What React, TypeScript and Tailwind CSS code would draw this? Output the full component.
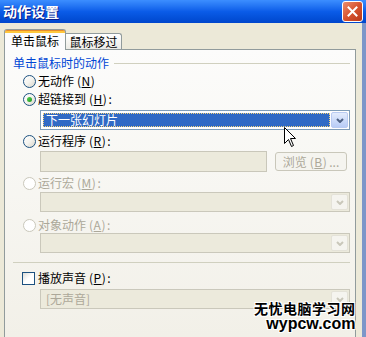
import React from "react";

const cjk = "font-['Noto_Sans_CJK_SC','Noto_Sans',sans-serif]";

function Radio({ checked, disabled }: { checked?: boolean; disabled?: boolean }) {
  return (
    <span
      className={`relative flex h-[13px] w-[13px] shrink-0 items-center justify-center rounded-full border ${
        disabled
          ? "border-[#CAC8BB] bg-white"
          : "border-[#1C5180] bg-gradient-to-br from-white via-[#F4F3EE] to-[#D6D4C8]"
      }`}
    >
      {checked && (
        <span className="h-[5px] w-[5px] rounded-full bg-gradient-to-br from-[#55D155] to-[#1A9A1A]" />
      )}
    </span>
  );
}

function Key({ k }: { k: string }) {
  return (
    <span className="ml-[3px] tracking-[0.5px]">
      (<u>{k}</u>)
    </span>
  );
}

function Chevron({ disabled }: { disabled?: boolean }) {
  return (
    <svg width="8" height="5" viewBox="0 0 8 5">
      <path
        d="M1 1 L4 4 L7 1"
        fill="none"
        stroke={disabled ? "#C9C7BA" : "#4D6185"}
        strokeWidth="2"
      />
    </svg>
  );
}

function Combo({
  disabled,
  text,
  selected,
}: {
  disabled?: boolean;
  text?: string;
  selected?: boolean;
}) {
  return (
    <div
      className={`ml-[35px] flex h-[20px] w-[310px] items-stretch border p-px ${
        disabled ? "border-[#CAC8BB] bg-[#ECEADC]" : "border-[#7F9DB9] bg-white"
      }`}
    >
      <div className="flex flex-1 items-stretch p-px">
        {selected ? (
          <div className="flex flex-1 items-center border border-dotted border-[#F4D27A] bg-[#316AC5] pl-[2px] text-white">
            {text}
          </div>
        ) : (
          <div className="flex flex-1 items-center pl-[3px] text-[#ACA899]">{text}</div>
        )}
      </div>
      <div
        className={`flex w-[17px] items-center justify-center rounded-[2px] border ${
          disabled
            ? "border-[#E4E2D8] bg-[#F5F4EF]"
            : "border-[#B9CBF2] bg-gradient-to-b from-[#E3ECFD] to-[#B8CCF6]"
        }`}
      >
        <Chevron disabled={disabled} />
      </div>
    </div>
  );
}

function RadioRow({
  label,
  k,
  checked,
  disabled,
  colon,
  mt,
}: {
  label: string;
  k: string;
  checked?: boolean;
  disabled?: boolean;
  colon?: boolean;
  mt: string;
}) {
  return (
    <div className={`${mt} ml-[18px] flex h-[16px] items-center`}>
      <Radio checked={checked} disabled={disabled} />
      <span className={`ml-[2px] flex items-center ${disabled ? "text-[#ACA899]" : "text-black"}`}>
        {label}
        <Key k={k} />
        {colon && <span className="ml-[1px]">:</span>}
      </span>
    </div>
  );
}

export default function App() {
  return (
    <div className={`relative flex h-[337px] w-[366px] flex-col overflow-hidden bg-[#ECE9D8] text-[12px] leading-[14px] ${cjk}`}>
      {/* title bar */}
      <div className="flex h-[23px] shrink-0 items-center justify-between bg-gradient-to-b from-[#3C8EFF] via-[#0B5CE8] to-[#0046CC] pl-[3px] pr-[3px]">
        <span className="pb-[2px] text-[14px] font-bold leading-[16px] text-white [text-shadow:1px_1px_0_#0A1C8A]">
          动作设置
        </span>
        <div className="flex h-[21px] w-[21px] items-center justify-center rounded-[3px] border border-white bg-gradient-to-br from-[#E98C6D] via-[#D7532F] to-[#B8381A]">
          <svg width="11" height="11" viewBox="0 0 11 11">
            <path d="M1.5 1.5 L9.5 9.5 M9.5 1.5 L1.5 9.5" stroke="white" strokeWidth="2" strokeLinecap="square" />
          </svg>
        </div>
      </div>

      {/* body */}
      <div className="flex flex-1 border-r-[4px] border-[#7D96C9] pt-[6px]">
        <div className="ml-[4px] flex w-[352px] flex-col">
          {/* tabs */}
          <div className="flex h-[20px] items-end">
            <div className="relative z-10 -mb-px flex h-[21px] w-[62px] flex-col rounded-t-[3px] border-x border-t border-[#919B9C] bg-[#FCFCFE]">
              <div className="h-[3px] rounded-t-[2px] border-t border-[#E68B2C] bg-[#FFC83C]" />
              <div className="flex flex-1 items-center justify-center pb-[1px] text-black">单击鼠标</div>
            </div>
            <div className="flex h-[16px] w-[56px] items-center justify-center rounded-tr-[3px] border-r border-t border-[#919B9C] bg-gradient-to-b from-white to-[#ECEBE6] text-black">
              鼠标移过
            </div>
          </div>

          {/* panel */}
          <div className="flex flex-1 flex-col border-x border-t border-[#919B9C] bg-gradient-to-b from-[#FCFCFB] to-[#F2F0E8]">
            <div className="mt-[6px] ml-[8px] mr-[5px] flex h-[14px] items-center">
              <span className="text-[#0046D5]">单击鼠标时的动作</span>
              <div className="ml-[5px] h-px flex-1 bg-[#D0D0BF]" />
            </div>

            <RadioRow mt="mt-[3px]" label="无动作" k="N" />
            <RadioRow mt="mt-[2px]" label="超链接到" k="H" colon checked />
            <div className="mt-[3px]">
              <Combo selected text="下一张幻灯片" />
            </div>

            <RadioRow mt="mt-[3px]" label="运行程序" k="R" colon />
            <div className="mt-[2px] ml-[35px] flex h-[21px] items-center">
              <div className="h-[21px] w-[227px] border border-[#C9C7BA] bg-[#ECEADC]" />
              <div className="ml-[8px] flex h-[19px] w-[72px] items-center justify-center rounded-[3px] border border-[#C9C7BA] bg-[#F5F4EF] text-[#ACA899]">
                浏览<Key k="B" />
                <span className="ml-[2px]">...</span>
              </div>
            </div>

            <RadioRow mt="mt-[3px]" label="运行宏" k="M" colon disabled />
            <div className="mt-[1px]">
              <Combo disabled />
            </div>

            <RadioRow mt="mt-[5px]" label="对象动作" k="A" colon disabled />
            <div className="mt-0">
              <Combo disabled />
            </div>

            <div className="mt-[9px] ml-[8px] mr-[5px] h-px bg-[#D0D0BF]" />

            <div className="mt-[7px] ml-[17px] flex h-[16px] items-center">
              <span className="h-[13px] w-[13px] shrink-0 border border-[#1C5180] bg-gradient-to-br from-[#DCDCD7] via-white to-white" />
              <span className="ml-[3px] flex items-center text-black">
                播放声音
                <Key k="P" />
                <span className="ml-[1px]">:</span>
              </span>
            </div>
            <div className="mt-[3px]">
              <Combo disabled text="[无声音]" />
            </div>
          </div>
        </div>
      </div>

      {/* mouse cursor */}
      <svg className="absolute left-[284px] top-[127px]" width="13" height="21" viewBox="0 0 13 21">
        <path d="M0.5 0.5 L0.5 16.5 L4.5 12.5 L7.5 19.5 L9.5 18.5 L6.5 11.5 L11.5 11.5 Z" fill="white" stroke="black" strokeWidth="1" />
      </svg>

      {/* watermark */}
      <div className="absolute left-[254px] top-[301px] flex flex-col items-end font-bold text-black [text-shadow:-1px_-1px_0_#fff,1px_-1px_0_#fff,-1px_1px_0_#fff,1px_1px_0_#fff]">
        <span className={`text-[14px] leading-[14px] tracking-[0.5px] ${cjk}`}>无忧电脑学习网</span>
        <span className="mt-[2px] font-['Liberation_Sans',sans-serif] text-[16px] leading-[14px]">wypcw.com</span>
      </div>
    </div>
  );
}
